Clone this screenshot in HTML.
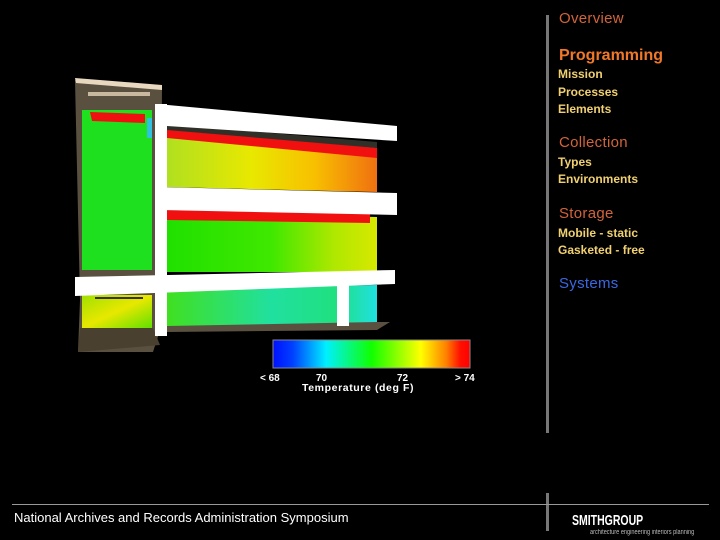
<!DOCTYPE html>
<html><head><meta charset="utf-8"><style>
html,body{margin:0;padding:0;background:#000;}
body{width:720px;height:540px;position:relative;overflow:hidden;font-family:"Liberation Sans",Arial,sans-serif;}
.a{position:absolute;white-space:nowrap;}
.h{font-size:15px;letter-spacing:0.3px;}
.s{font-size:12px;font-weight:bold;color:#f0d070;}
</style></head><body>
<svg class="a" style="left:0;top:0" width="540" height="400" viewBox="0 0 540 400">
<defs>
<linearGradient id="cb" x1="0" x2="1"><stop offset="0" stop-color="#0010ff"/><stop offset="0.1" stop-color="#0040ff"/><stop offset="0.27" stop-color="#00f0ff"/><stop offset="0.5" stop-color="#10ff00"/><stop offset="0.75" stop-color="#ffff00"/><stop offset="0.88" stop-color="#ff8000"/><stop offset="0.95" stop-color="#ff1000"/><stop offset="1" stop-color="#ff0000"/></linearGradient>
<linearGradient id="f1" x1="0" x2="1"><stop offset="0" stop-color="#b0e020"/><stop offset="0.4" stop-color="#e8e800"/><stop offset="0.7" stop-color="#f8c000"/><stop offset="1" stop-color="#f07010"/></linearGradient>
<linearGradient id="f2" x1="0" x2="1"><stop offset="0" stop-color="#20e000"/><stop offset="0.5" stop-color="#40e800"/><stop offset="0.8" stop-color="#b0e800"/><stop offset="1" stop-color="#d8e800"/></linearGradient>
<linearGradient id="f3" x1="0" x2="1"><stop offset="0" stop-color="#40e020"/><stop offset="0.5" stop-color="#20e0a0"/><stop offset="0.8" stop-color="#20e080"/><stop offset="1" stop-color="#20e0e0"/></linearGradient>
<linearGradient id="t3" x1="0" y1="0" x2="1" y2="1"><stop offset="0" stop-color="#a0e000"/><stop offset="0.5" stop-color="#e8e800"/><stop offset="1" stop-color="#60e000"/></linearGradient>
</defs>
<polygon points="75,80 162,88 160,330 153,352 78,352 80,300" fill="#5a5040"/>
<polygon points="75,78 162,85 162,90 76,83" fill="#e8d8c0"/>
<rect x="88" y="92" width="62" height="4" fill="#c8b8a0"/>
<rect x="82" y="110" width="70" height="160" fill="#1ee01e"/>
<polygon points="90,112 145,114 145,123 92,121" fill="#f01010"/>
<rect x="147" y="118" width="5" height="20" fill="#30c0e0"/>
<rect x="82" y="295" width="70" height="33" fill="url(#t3)"/>
<rect x="95" y="297" width="48" height="2" fill="#403020"/>
<polygon points="80,328 153,328 160,345 78,352" fill="#4a4030"/>
<polygon points="167,128 377,148 377,192 167,187" fill="url(#f1)"/>
<polygon points="167,128 377,148 377,158 167,138" fill="#f01010"/>
<polygon points="167,124 377,142 377,148 167,130" fill="#303028"/>
<polygon points="167,212 377,217 377,272 167,272" fill="url(#f2)"/>
<polygon points="167,210 370,214 370,223 167,220" fill="#f01010"/>
<polygon points="167,288 377,285 377,326 167,326" fill="url(#f3)"/>
<polygon points="167,326 377,322 390,322 377,330 167,332" fill="#5a5040"/>
<polygon points="157,104 397,126 397,141 167,126 157,125" fill="#fff"/>
<polygon points="160,187 397,193 397,215 160,210" fill="#fff"/>
<polygon points="75,277 395,270 395,284 75,296" fill="#fff"/>
<rect x="155" y="104" width="12" height="232" fill="#fff"/>
<rect x="337" y="284" width="12" height="42" fill="#fff"/>
<rect x="273" y="340" width="197" height="28" fill="url(#cb)" stroke="#888" stroke-width="1"/>
<g font-family="Liberation Sans,Arial,sans-serif" font-weight="bold" font-size="10" fill="#fff">
<text x="260" y="381">&lt; 68</text><text x="316" y="381">70</text><text x="397" y="381">72</text><text x="455" y="381">&gt; 74</text>
<text x="302" y="391" font-size="10.5" letter-spacing="0.6">Temperature (deg F)</text>
</g>
</svg>
<div class="a" style="left:546px;top:15px;width:3px;height:418px;background:#777"></div>
<div class="a" style="left:546px;top:493px;width:3px;height:38px;background:#777"></div>
<div class="a" style="left:12px;top:504px;width:697px;height:1px;background:#999"></div>
<div class="a h" style="left:559px;top:10px;color:#d2643a">Overview</div>
<div class="a h" style="left:559px;top:47px;color:#f07828;font-weight:bold;font-size:16px;letter-spacing:0">Programming</div>
<div class="a s" style="left:558px;top:67px">Mission</div>
<div class="a s" style="left:558px;top:85px">Processes</div>
<div class="a s" style="left:558px;top:102px">Elements</div>
<div class="a h" style="left:559px;top:134px;color:#d2643a">Collection</div>
<div class="a s" style="left:558px;top:155px">Types</div>
<div class="a s" style="left:558px;top:172px">Environments</div>
<div class="a h" style="left:559px;top:205px;color:#d2643a">Storage</div>
<div class="a s" style="left:558px;top:226px">Mobile - static</div>
<div class="a s" style="left:558px;top:243px">Gasketed - free</div>
<div class="a h" style="left:559px;top:275px;color:#3a68e0">Systems</div>
<div class="a" style="left:14px;top:510px;color:#fff;font-size:13px">National Archives and Records Administration Symposium</div>
<div class="a" style="left:572px;top:512px;color:#fff;font-size:15px;font-weight:bold;transform:scaleX(0.7);transform-origin:left">SMITHGROUP</div>
<div class="a" style="left:590px;top:529px;color:#bbb;font-size:7px;transform:scaleX(0.8);transform-origin:left">architecture engineering interiors planning</div>
</body></html>
